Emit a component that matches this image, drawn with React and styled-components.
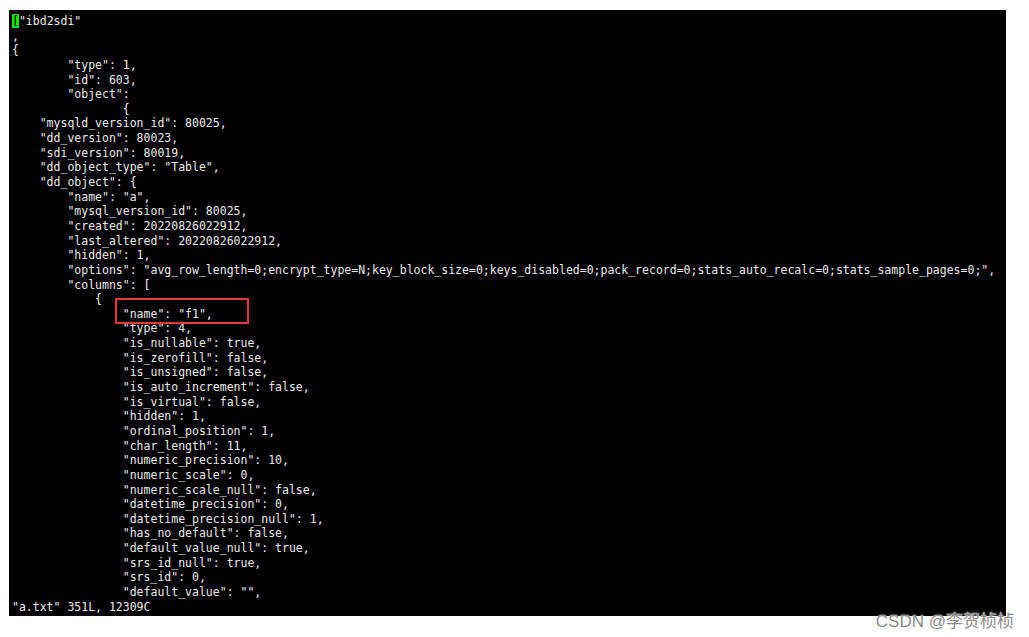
import React from 'react';
import styled, { createGlobalStyle } from 'styled-components';

const GlobalStyle = createGlobalStyle`
  html, body {
    margin: 0;
    padding: 0;
    background: #ffffff;
  }
`;

const lines = [
  null, // first line holds the cursor
  ',',
  '{',
  '        "type": 1,',
  '        "id": 603,',
  '        "object":',
  '                {',
  '    "mysqld_version_id": 80025,',
  '    "dd_version": 80023,',
  '    "sdi_version": 80019,',
  '    "dd_object_type": "Table",',
  '    "dd_object": {',
  '        "name": "a",',
  '        "mysql_version_id": 80025,',
  '        "created": 20220826022912,',
  '        "last_altered": 20220826022912,',
  '        "hidden": 1,',
  '        "options": "avg_row_length=0;encrypt_type=N;key_block_size=0;keys_disabled=0;pack_record=0;stats_auto_recalc=0;stats_sample_pages=0;",',
  '        "columns": [',
  '            {',
  '                "name": "f1",',
  '                "type": 4,',
  '                "is_nullable": true,',
  '                "is_zerofill": false,',
  '                "is_unsigned": false,',
  '                "is_auto_increment": false,',
  '                "is_virtual": false,',
  '                "hidden": 1,',
  '                "ordinal_position": 1,',
  '                "char_length": 11,',
  '                "numeric_precision": 10,',
  '                "numeric_scale": 0,',
  '                "numeric_scale_null": false,',
  '                "datetime_precision": 0,',
  '                "datetime_precision_null": 1,',
  '                "has_no_default": false,',
  '                "default_value_null": true,',
  '                "srs_id_null": true,',
  '                "srs_id": 0,',
  '                "default_value": "",',
  '"a.txt" 351L, 12309C'
];

export default function App() {
  return (
    <Page>
      <GlobalStyle />
      <Terminal>
        {lines.map((text, i) => (
          <Line key={i}>
            {text === null ? (
              <>
                <Cursor>[</Cursor>"ibd2sdi"
              </>
            ) : (
              text
            )}
          </Line>
        ))}
        <Highlight />
      </Terminal>
      <Watermark>CSDN @李贺桢桢</Watermark>
    </Page>
  );
}

const Page = styled.div`
  position: relative;
  width: 1029px;
  height: 637px;
  padding: 10px 0 0 9px;
  box-sizing: border-box;
  background: #ffffff;
`;

const Terminal = styled.div`
  position: relative;
  width: 997px;
  height: 606px;
  box-sizing: border-box;
  padding: 4px 0 0 3px;
  background: #000000;
  color: #ececec;
  font-family: "DejaVu Sans Mono", "Liberation Mono", monospace;
  font-size: 11.5px;
  line-height: 14.65px;
`;

const Line = styled.div`
  white-space: pre;
  height: 14.65px;
`;

const Cursor = styled.span`
  background: #18e018;
  color: #000000;
`;

const Highlight = styled.div`
  position: absolute;
  left: 106px;
  top: 288px;
  width: 134px;
  height: 26px;
  box-sizing: border-box;
  border: 2px solid #e8393a;
`;

const Watermark = styled.div`
  position: absolute;
  right: 15px;
  top: 607px;
  font-family: "Liberation Sans", "Noto Sans CJK SC", sans-serif;
  font-size: 17px;
  color: #8a8a8a;
  text-shadow: 0 0 2px #ffffff, 0 0 1px #ffffff;
`;
